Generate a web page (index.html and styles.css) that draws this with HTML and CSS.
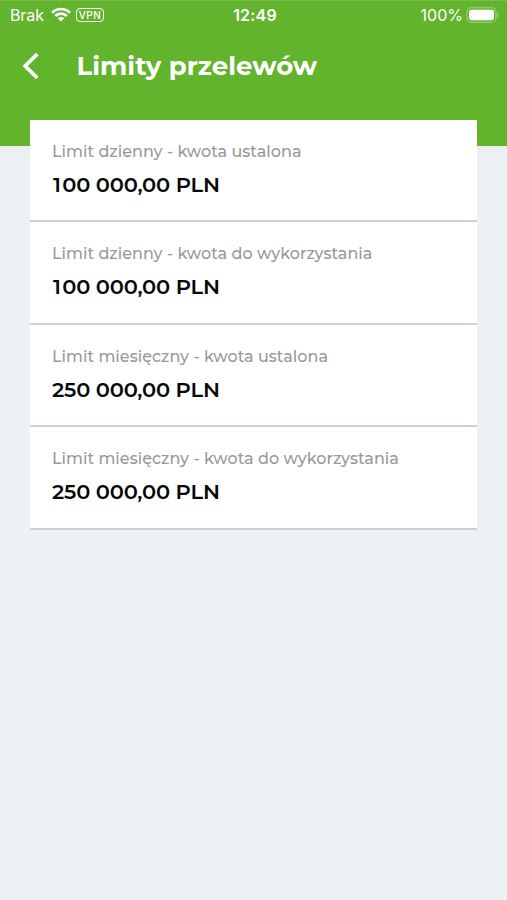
FILE: index.html
```html
<!DOCTYPE html>
<html lang="pl">
<head>
<meta charset="utf-8">
<title>Limity przelewów</title>
<link rel="stylesheet" href="styles.css">
</head>
<body>
<header class="top">
  <div class="status">
    <div class="status-left">
      <span class="carrier">Brak</span>
      <svg class="wifi" width="20" height="15" viewBox="0 0 20 15" fill="none" stroke="#fff" stroke-width="2.7"><path d="M1.1 5.7a12.6 12.6 0 0 1 17.8 0M4.2 9a8.2 8.2 0 0 1 11.6 0"/><path d="M10 14.6l-3.2-3.2a4.6 4.6 0 0 1 6.4 0z" fill="#fff" stroke="none"/></svg>
      <span class="vpn">VPN</span>
    </div>
    <span class="time">12:49</span>
    <div class="status-right">
      <span class="percent">100%</span>
      <svg width="34" height="16" viewBox="0 0 34 16"><rect x="1" y=".8" width="29" height="14.4" rx="4.2" fill="none" stroke="#fff" stroke-opacity=".4" stroke-width="1.1"/><rect x="3" y="2.8" width="25" height="10.4" rx="2.4" fill="#fff"/><path d="M31.3 5.5c2 .8 2 4.2 0 5z" fill="#fff" fill-opacity=".4"/></svg>
    </div>
  </div>
  <div class="nav">
    <svg class="back" width="18" height="28" viewBox="0 0 18 28" fill="none" stroke="#fff" stroke-width="3.7"><path d="M16.2 2.1L4.2 14l12 11.9"/></svg>
    <h1 class="title">Limity przelewów</h1>
  </div>
</header>
<main class="limits">
  <section class="limit"><div class="label">Limit dzienny - kwota ustalona</div><div class="value"><span class="one">1</span>00 000,00 PLN</div></section>
  <section class="limit"><div class="label">Limit dzienny - kwota do wykorzystania</div><div class="value"><span class="one">1</span>00 000,00 PLN</div></section>
  <section class="limit"><div class="label">Limit miesięczny - kwota ustalona</div><div class="value">250 000,00 PLN</div></section>
  <section class="limit"><div class="label">Limit miesięczny - kwota do wykorzystania</div><div class="value">250 000,00 PLN</div></section>
</main>
</body>
</html>
```
FILE: styles.css
```css
* { box-sizing: border-box; }
body {
  margin: 0;
  min-height: 900px;
  background: #edf1f4;
  font-family: Montserrat, Inter, sans-serif;
}
.top {
  height: 146px;
  background: #62b42c;
  border-top: 1px solid #78bd4d;
  color: #fff;
}
.status {
  display: grid;
  grid-template-columns: 1fr auto 1fr;
  align-items: center;
  height: 27px;
  padding: 0 7px 0 10px;
  font: 400 16px/20px Inter, sans-serif;
}
.status-left, .status-right { display: flex; align-items: center; }
.status-right { justify-content: flex-end; gap: 3px; }
.carrier { width: 41px; letter-spacing: -.1px; }
.vpn {
  width: 28px;
  height: 14px;
  margin-left: 5px;
  border: 1px solid #fff;
  border-radius: 4px;
  font-size: 10px;
  font-weight: 500;
  line-height: 12px;
  letter-spacing: .4px;
  text-align: center;
}
.time { font-weight: 600; letter-spacing: .2px; }
.nav { display: flex; align-items: center; height: 76px; padding-left: 21px; }
.title {
  margin: 0 0 0 37.5px;
  font-size: 26px;
  font-weight: 700;
  line-height: 34px;
}
.limits { margin: -26px 30px 0; position: relative; }
.limit {
  height: 102.4px;
  padding: 20px 22px 0;
  background: #fff;
  border-bottom: 2px solid #cdcfdb;
}
.label {
  color: #999;
  font-size: 16px;
  font-weight: 500;
  line-height: 24px;
  letter-spacing: .03px;
  white-space: nowrap;
}
.value {
  margin-top: 7px;
  color: #080808;
  font-size: 21px;
  font-weight: 600;
  line-height: 28px;
  letter-spacing: -.17px;
  white-space: nowrap;
}
.one { margin: 0 1.4px 0 1px; }
```
